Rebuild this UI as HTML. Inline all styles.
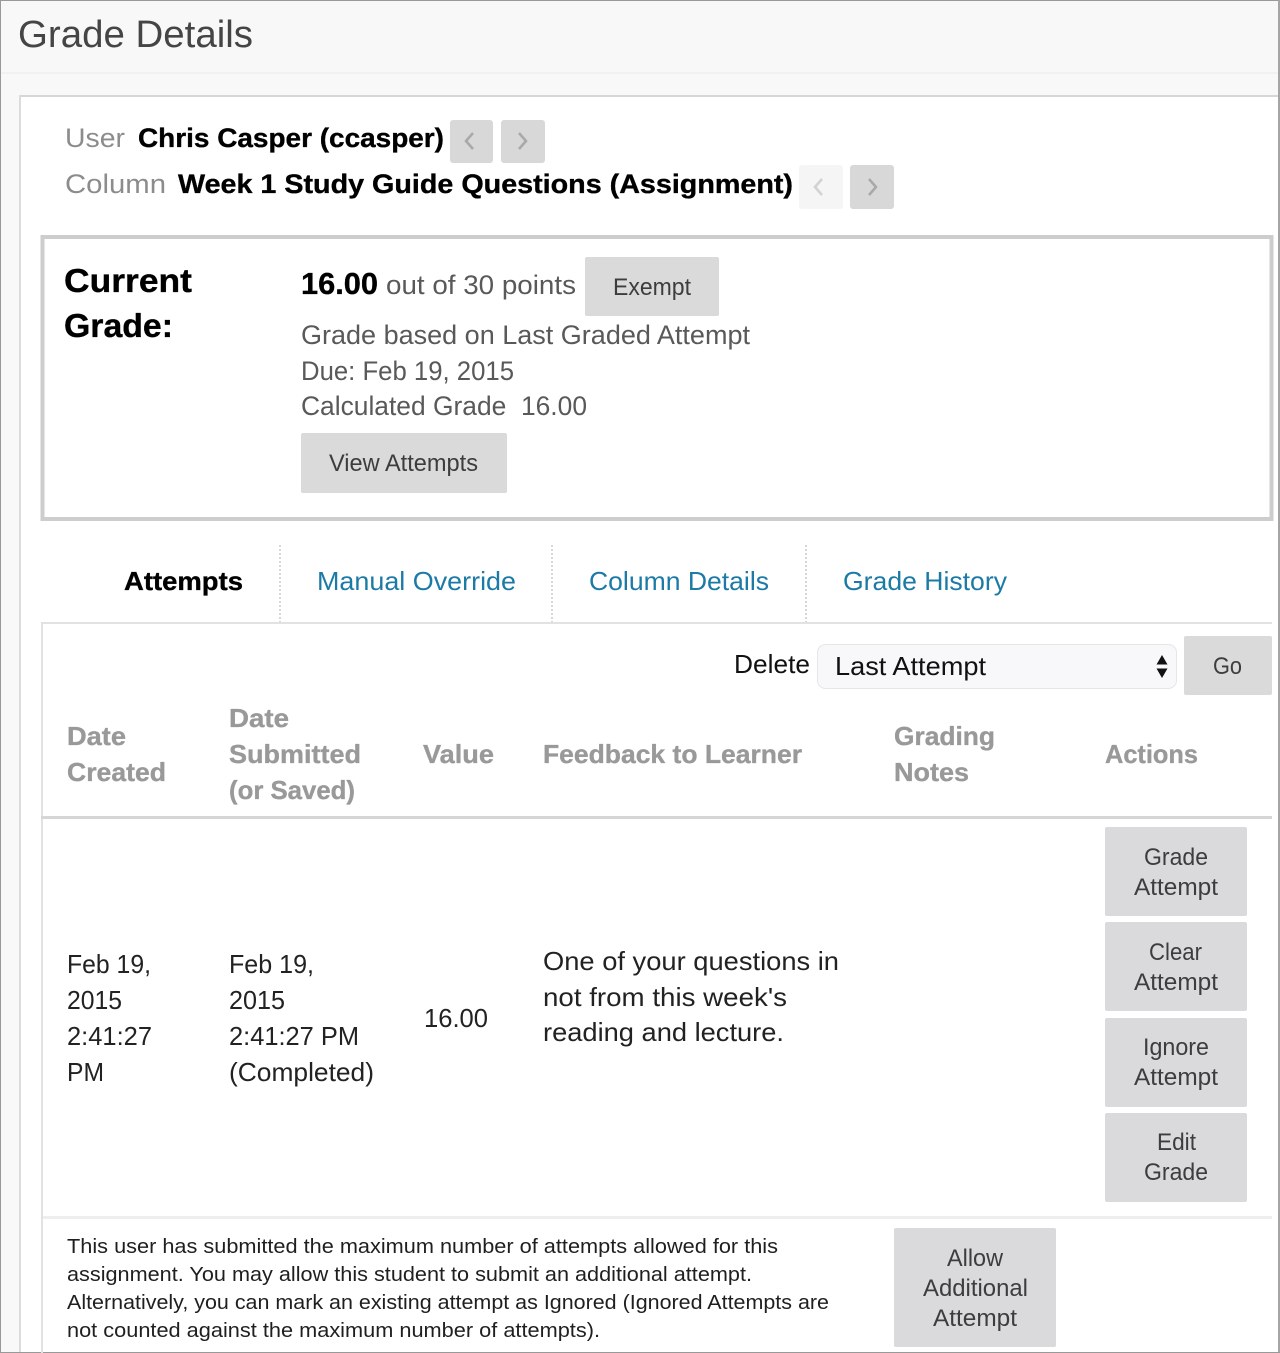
<!DOCTYPE html>
<html lang="en">
<head>
<meta charset="utf-8">
<title>Grade Details</title>
<style>
html,body{margin:0;padding:0;background:#fff}
body{width:1280px;height:1353px;overflow:hidden}
svg{display:block}
text{font-family:"Liberation Sans",sans-serif;white-space:pre}
.b{font-weight:700;stroke:#000;stroke-width:.35px}
.body{font-size:25.6px;fill:#222}
.th{font-size:26px;font-weight:700;fill:#999;stroke:#999;stroke-width:.35px}
.btn{font-size:24px;fill:#3d3d3d}
.g{font-size:27px;fill:#595959}
.tab{font-size:26px;fill:#1c7aa6}
.p{font-size:20.6px;fill:#1f1f1f}
.bt{fill:#dadadc}
</style>
</head>
<body>
<svg xmlns="http://www.w3.org/2000/svg" width="1280" height="1353" viewBox="0 0 1280 1353">
<rect width="1280" height="1353" fill="#f8f8f8"/>
<rect x="0" y="72" width="1280" height="2" fill="#f1f1f1"/>
<rect x="20" y="96" width="1259" height="1257" fill="#fff"/>
<rect x="19" y="95" width="1260" height="2" fill="#d6d6d6"/>
<rect x="19" y="95" width="2" height="1258" fill="#dcdcdc"/>
<rect x="0" y="0" width="1280" height="1" fill="#999"/>
<rect x="0" y="0" width="1" height="1353" fill="#999"/>
<rect x="1278" y="0" width="2" height="1353" fill="#a5a5a5"/>
<rect x="0" y="1352" width="1280" height="1" fill="#999"/>

<text x="18" y="47" font-size="38" fill="#454545" textLength="235" lengthAdjust="spacingAndGlyphs">Grade Details</text>

<text x="65" y="147" font-size="27" fill="#8c8c8c" textLength="60" lengthAdjust="spacingAndGlyphs">User</text>
<text x="138" y="147" class="b" font-size="27" fill="#000" textLength="306" lengthAdjust="spacingAndGlyphs">Chris Casper (ccasper)</text>
<rect x="450" y="120" width="43" height="43" rx="3" fill="#d8d8d8"/>
<rect x="501" y="120" width="44" height="43" rx="3" fill="#d8d8d8"/>
<path d="M473 133l-7 8 7 8" fill="none" stroke="#a9a9a9" stroke-width="2.6"/>
<path d="M519 133l7 8-7 8" fill="none" stroke="#a9a9a9" stroke-width="2.6"/>

<text x="65" y="193" font-size="27" fill="#8c8c8c" textLength="101" lengthAdjust="spacingAndGlyphs">Column</text>
<text x="178" y="193" class="b" font-size="27" fill="#000" textLength="615" lengthAdjust="spacingAndGlyphs">Week 1 Study Guide Questions (Assignment)</text>
<rect x="799" y="165" width="44" height="44" rx="3" fill="#f5f5f5"/>
<rect x="850" y="165" width="44" height="44" rx="3" fill="#d8d8d8"/>
<path d="M822 179l-7 8 7 8" fill="none" stroke="#d2d2d2" stroke-width="2.6"/>
<path d="M869 179l7 8-7 8" fill="none" stroke="#a9a9a9" stroke-width="2.6"/>

<rect x="42.500" y="237" width="1229" height="282" fill="#fff" stroke="#cdcdcd" stroke-width="4"/>
<text x="64" y="292" class="b" font-size="33" fill="#000" textLength="128" lengthAdjust="spacingAndGlyphs">Current</text>
<text x="64" y="337" class="b" font-size="33" fill="#000" textLength="109" lengthAdjust="spacingAndGlyphs">Grade:</text>
<text x="301" y="294" class="b" font-size="31" fill="#000" textLength="77" lengthAdjust="spacingAndGlyphs">16.00</text>
<text x="386" y="294" class="g" textLength="190" lengthAdjust="spacingAndGlyphs">out of 30 points</text>
<rect x="585" y="257" width="134" height="59" rx="2" fill="#dadada"/>
<text x="613" y="295" class="btn" textLength="78" lengthAdjust="spacingAndGlyphs">Exempt</text>
<text x="301" y="344" class="g" textLength="449" lengthAdjust="spacingAndGlyphs">Grade based on Last Graded Attempt</text>
<text x="301" y="380" class="g" textLength="213" lengthAdjust="spacingAndGlyphs">Due: Feb 19, 2015</text>
<text x="301" y="415" class="g" textLength="286" lengthAdjust="spacingAndGlyphs">Calculated Grade  16.00</text>
<rect x="301" y="433" width="206" height="60" rx="2" fill="#dadada"/>
<text x="329" y="471" class="btn" textLength="149" lengthAdjust="spacingAndGlyphs">View Attempts</text>

<text x="124" y="590" class="b" font-size="26" fill="#000" textLength="119" lengthAdjust="spacingAndGlyphs">Attempts</text>
<text x="317" y="590" class="tab" textLength="199" lengthAdjust="spacingAndGlyphs">Manual Override</text>
<text x="589" y="590" class="tab" textLength="180" lengthAdjust="spacingAndGlyphs">Column Details</text>
<text x="843" y="590" class="tab" textLength="164" lengthAdjust="spacingAndGlyphs">Grade History</text>
<path d="M280 545V622M552 545V622M806 545V622" stroke="#c4c4c4" stroke-width="1.4" stroke-dasharray="2 2" fill="none"/>

<rect x="41" y="622" width="1231" height="2" fill="#e2e2e2"/>
<rect x="41" y="622" width="2" height="731" fill="#e2e2e2"/>

<text x="734" y="673" font-size="26" fill="#111" textLength="76" lengthAdjust="spacingAndGlyphs">Delete</text>
<rect x="817.500" y="644.500" width="359" height="44" rx="8" fill="#f8f8fa" stroke="#e6e6e6"/>
<text x="835" y="675" font-size="26" fill="#111" textLength="151" lengthAdjust="spacingAndGlyphs">Last Attempt</text>
<path d="M1162 655l5.500 9.500h-11zM1162 678l5.500-9.500h-11z" fill="#111"/>
<rect x="1184" y="636" width="88" height="59" rx="2" fill="#dadada"/>
<text x="1213" y="674" class="btn" textLength="29" lengthAdjust="spacingAndGlyphs">Go</text>

<text x="67" y="745" class="th" textLength="59" lengthAdjust="spacingAndGlyphs">Date</text>
<text x="67" y="781" class="th" textLength="99" lengthAdjust="spacingAndGlyphs">Created</text>
<text x="229" y="727" class="th" textLength="60" lengthAdjust="spacingAndGlyphs">Date</text>
<text x="229" y="763" class="th" textLength="132" lengthAdjust="spacingAndGlyphs">Submitted</text>
<text x="229" y="799" class="th" textLength="126" lengthAdjust="spacingAndGlyphs">(or Saved)</text>
<text x="423" y="763" class="th" textLength="71" lengthAdjust="spacingAndGlyphs">Value</text>
<text x="543" y="763" class="th" textLength="259" lengthAdjust="spacingAndGlyphs">Feedback to Learner</text>
<text x="894" y="745" class="th" textLength="101" lengthAdjust="spacingAndGlyphs">Grading</text>
<text x="894" y="781" class="th" textLength="75" lengthAdjust="spacingAndGlyphs">Notes</text>
<text x="1105" y="763" class="th" textLength="93" lengthAdjust="spacingAndGlyphs">Actions</text>
<rect x="41" y="816" width="1231" height="3" fill="#d6d6d6"/>

<text x="67" y="973" class="body" textLength="84" lengthAdjust="spacingAndGlyphs">Feb 19,</text>
<text x="67" y="1009" class="body" textLength="55" lengthAdjust="spacingAndGlyphs">2015</text>
<text x="67" y="1045" class="body" textLength="85" lengthAdjust="spacingAndGlyphs">2:41:27</text>
<text x="67" y="1081" class="body" textLength="37" lengthAdjust="spacingAndGlyphs">PM</text>
<text x="229" y="973" class="body" textLength="85" lengthAdjust="spacingAndGlyphs">Feb 19,</text>
<text x="229" y="1009" class="body" textLength="56" lengthAdjust="spacingAndGlyphs">2015</text>
<text x="229" y="1045" class="body" textLength="130" lengthAdjust="spacingAndGlyphs">2:41:27 PM</text>
<text x="229" y="1081" class="body" textLength="145" lengthAdjust="spacingAndGlyphs">(Completed)</text>
<text x="424" y="1027" class="body" textLength="64" lengthAdjust="spacingAndGlyphs">16.00</text>
<text x="543" y="970" class="body" textLength="296" lengthAdjust="spacingAndGlyphs">One of your questions in</text>
<text x="543" y="1006" class="body" textLength="244" lengthAdjust="spacingAndGlyphs">not from this week's</text>
<text x="543" y="1041" class="body" textLength="241" lengthAdjust="spacingAndGlyphs">reading and lecture.</text>

<rect x="1105" y="827" width="142" height="89" rx="2" class="bt"/>
<rect x="1105" y="922" width="142" height="89" rx="2" class="bt"/>
<rect x="1105" y="1018" width="142" height="89" rx="2" class="bt"/>
<rect x="1105" y="1113" width="142" height="89" rx="2" class="bt"/>
<text x="1144" y="865" class="btn" textLength="64" lengthAdjust="spacingAndGlyphs">Grade</text>
<text x="1134" y="895" class="btn" textLength="84" lengthAdjust="spacingAndGlyphs">Attempt</text>
<text x="1149" y="960" class="btn" textLength="53" lengthAdjust="spacingAndGlyphs">Clear</text>
<text x="1134" y="990" class="btn" textLength="84" lengthAdjust="spacingAndGlyphs">Attempt</text>
<text x="1143" y="1055" class="btn" textLength="66" lengthAdjust="spacingAndGlyphs">Ignore</text>
<text x="1134" y="1085" class="btn" textLength="84" lengthAdjust="spacingAndGlyphs">Attempt</text>
<text x="1157" y="1150" class="btn" textLength="39" lengthAdjust="spacingAndGlyphs">Edit</text>
<text x="1144" y="1180" class="btn" textLength="64" lengthAdjust="spacingAndGlyphs">Grade</text>

<rect x="43" y="1216" width="1229" height="3" fill="#eeeeee"/>
<text x="67" y="1253" class="p" textLength="711" lengthAdjust="spacingAndGlyphs">This user has submitted the maximum number of attempts allowed for this</text>
<text x="67" y="1281" class="p" textLength="685" lengthAdjust="spacingAndGlyphs">assignment. You may allow this student to submit an additional attempt.</text>
<text x="67" y="1309" class="p" textLength="762" lengthAdjust="spacingAndGlyphs">Alternatively, you can mark an existing attempt as Ignored (Ignored Attempts are</text>
<text x="67" y="1337" class="p" textLength="533" lengthAdjust="spacingAndGlyphs">not counted against the maximum number of attempts).</text>

<rect x="894" y="1228" width="162" height="119" rx="2" class="bt"/>
<text x="947" y="1266" class="btn" textLength="56" lengthAdjust="spacingAndGlyphs">Allow</text>
<text x="923" y="1296" class="btn" textLength="105" lengthAdjust="spacingAndGlyphs">Additional</text>
<text x="933" y="1326" class="btn" textLength="84" lengthAdjust="spacingAndGlyphs">Attempt</text>
</svg>
</body>
</html>
